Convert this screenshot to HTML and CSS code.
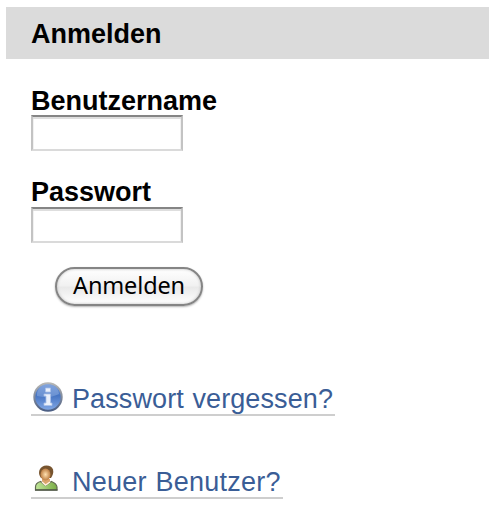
FILE: index.html
```html
<!DOCTYPE html>
<html lang="de">
<head>
<meta charset="utf-8">
<title>Anmelden</title>
<link rel="stylesheet" href="styles.css">
</head>
<body>
<main class="login">
  <h1 class="title">Anmelden</h1>
  <form class="form">
    <label class="label" for="user">Benutzername</label>
    <input class="field" id="user" type="text">
    <label class="label raised" for="pass">Passwort</label>
    <input class="field" id="pass" type="password">
    <button class="submit" type="button">Anmelden</button>
  </form>
  <nav class="links">
    <a class="link forgot" href="#">
      <svg class="icon" viewBox="0 0 32 32">
        <defs>
          <linearGradient id="blue" x2="0" y2="1"><stop offset="0" stop-color="#6f96d8"/><stop offset=".45" stop-color="#4775c3"/><stop offset="1" stop-color="#83a9e6"/></linearGradient>
          <linearGradient id="rim" x2="0" y2="1"><stop offset="0" stop-color="#b6b6b4"/><stop offset="1" stop-color="#4c5f84"/></linearGradient>
        </defs>
        <circle cx="16" cy="16" r="13.7" fill="url(#blue)" stroke="url(#rim)" stroke-width="2"/>
        <path d="M5 15a11 11 0 0 1 22-2q-9 5-22 2z" fill="#9ab5e5" opacity=".45"/>
        <path d="M13.5 7h5v4h-5zM12 13h6.500v9h1.500v2.500h-8v-2.500h2v-7h-2z" fill="#eaf0fb" stroke="#a9c0e9" stroke-width=".8"/>
      </svg>
      <span>Passwort vergessen?</span>
    </a>
    <a class="link register" href="#">
      <svg class="icon" viewBox="0 0 32 32">
        <defs>
          <radialGradient id="skin"><stop offset="0" stop-color="#ffe0b0"/><stop offset="1" stop-color="#bd7e43"/></radialGradient>
          <linearGradient id="shirt"><stop offset="0" stop-color="#c1e69a"/><stop offset="1" stop-color="#79ad45"/></linearGradient>
        </defs>
        <path d="M3.500 26v-3q0-4 5-5.500l5 4 6-4q5 2 5.500 5.500v3z" fill="url(#shirt)" stroke="#626b51" stroke-width="1.200"/>
        <path d="M10 15h8v3l-3 3h-2l-3-3z" fill="#dba56d"/>
        <path d="M9 14q-3-4-1.500-8 2-4.500 7-4.500t6.500 4q1 4-2 8.500z" fill="#77542f"/>
        <ellipse cx="13.500" cy="10.500" rx="5" ry="6" fill="url(#skin)"/>
        <path d="M10 18l3.500 3 4.500-3" fill="none" stroke="#fff1de" stroke-width="1.500"/>
        <path d="M3 26h22.500" stroke="#515849" stroke-width="1.500"/>
      </svg>
      <span>Neuer Benutzer?</span>
    </a>
  </nav>
</main>
</body>
</html>
```
FILE: styles.css
```css
* { box-sizing: border-box; }
body {
  margin: 0;
  background: #fff;
  color: #000;
  font: 27px/30px "Liberation Sans", Arial, sans-serif;
}
.login { padding: 7px 5px 0 6px; }
.title {
  height: 52px;
  margin: 0;
  padding-left: 25px;
  background: #dbdbdb;
  font-size: 27px;
  line-height: 55px;
}
.form {
  display: flex;
  flex-direction: column;
  align-items: flex-start;
  padding: 27px 0 0 25px;
}
.label { height: 29px; font-weight: bold; }
.raised { line-height: 28px; }
.field {
  width: 152px;
  height: 36px;
  margin: 0 0 27px;
  padding: 4px;
  border: 2px solid #c3c3c3;
  border-top-color: #858585;
  border-bottom-color: #dadada;
  border-radius: 0;
  background: #fff;
  box-shadow: inset 0 2px #dedede, inset 1px 0 #f1f1f1, inset -1px 0 #f1f1f1;
  outline: none;
}
.submit {
  width: 148px;
  height: 39px;
  margin: -3px 0 0 24px;
  padding: 0 0 2px;
  border: 2px solid #858585;
  border-radius: 20px;
  background: linear-gradient(#fff 0%, #f1f1f1 48%, #e9e9e9 52%, #fff 100%);
  box-shadow: 0 1px 2px #b5b5b5, inset 0 0 3px #b8b8b8;
  color: #000;
  font: 23.5px/33px "Noto Sans", sans-serif;
  letter-spacing: -.15px;
}
.links {
  display: flex;
  flex-direction: column;
  align-items: flex-start;
  padding: 75px 0 0 25px;
  gap: 48px;
}
.link {
  display: flex;
  height: 35px;
  border-bottom: 2px solid #cecece;
  color: #3a5d96;
  text-decoration: none;
  white-space: nowrap;
  line-height: 37px;
}
.icon { flex: none; width: 32px; height: 32px; margin-right: 8px; margin-left: 1px; }
.forgot { width: 304px; letter-spacing: .1px; word-spacing: 1px; }
.register { width: 252px; letter-spacing: .25px; word-spacing: 1px; }
```
